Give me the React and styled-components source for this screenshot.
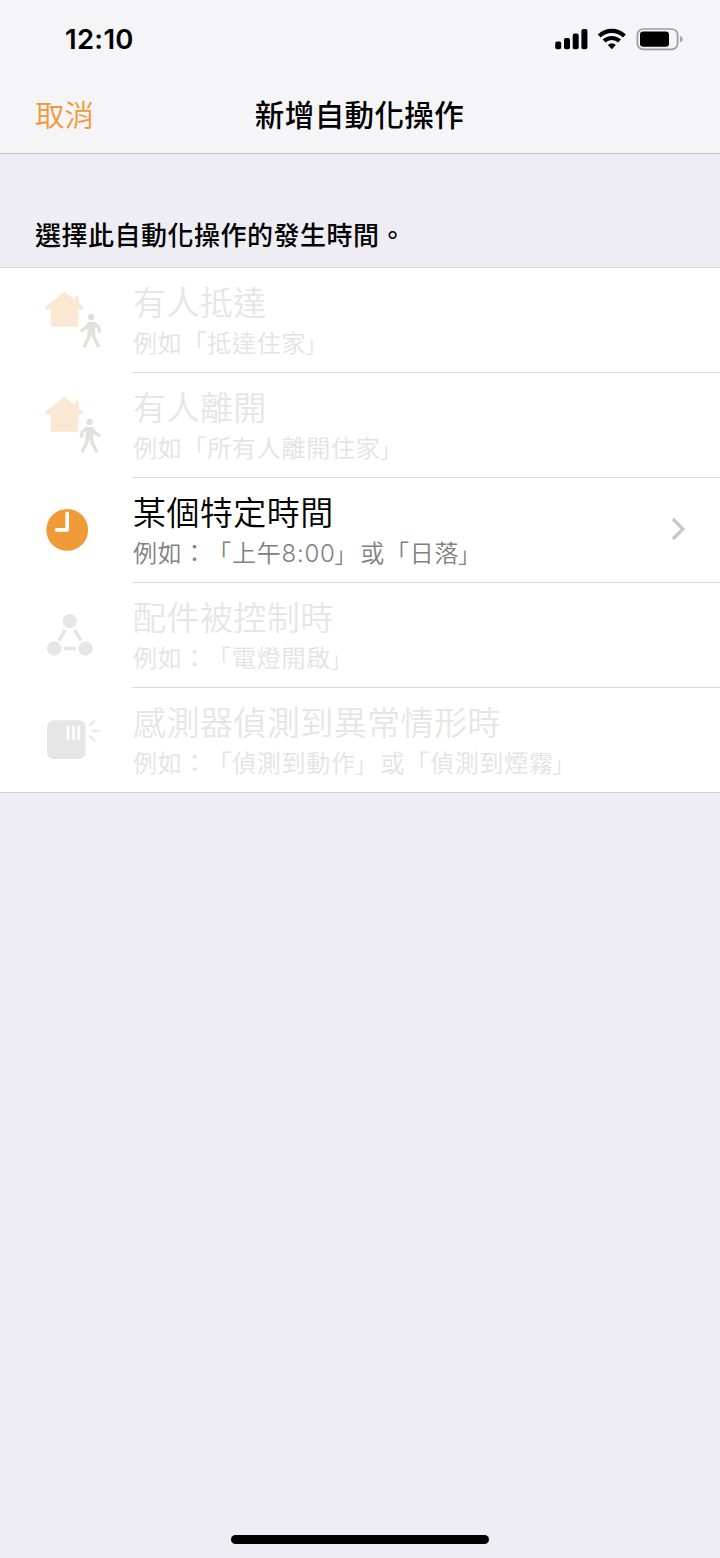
import React from 'react';
import styled, { createGlobalStyle } from 'styled-components';

const GlobalStyle = createGlobalStyle`
  * { box-sizing: border-box; }
  html, body { margin: 0; padding: 0; }
  body {
    background: #eeedf3;
    color: #000;
    font-family: Inter, "Noto Sans CJK TC", sans-serif;
    text-spacing-trim: space-all;
  }
`;

const Screen = styled.div`
  display: flex;
  flex-direction: column;
  width: 720px;
  height: 1558px;
  background: #eeedf3;
  overflow: hidden;
`;

const TopArea = styled.header`
  flex: none;
  height: 154px;
  background: #f5f5f8;
  border-bottom: 1px solid #c2c2c5;
`;

const StatusBar = styled.div`
  display: flex;
  justify-content: space-between;
  align-items: center;
  height: 78px;
  padding: 0 36px 0 65px;
`;

const Clock = styled.span`
  font-size: 27.5px;
  line-height: 34px;
  font-weight: 600;
  letter-spacing: 0.3px;
`;

const StatusIcons = styled.svg`
  display: block;
  width: 129px;
  height: 24px;
`;

const NavBar = styled.nav`
  display: grid;
  grid-template-columns: 180px 1fr 180px;
  align-items: center;
  height: 74px;
`;

const CancelButton = styled.button`
  justify-self: start;
  margin: 0 0 0 35px;
  padding: 0;
  border: 0;
  background: none;
  color: #f09a37;
  font-family: inherit;
  font-weight: 350;
  font-size: 29.5px;
  line-height: 42px;
`;

const NavTitle = styled.h1`
  margin: 0;
  padding-right: 1px;
  text-align: center;
  font-size: 29.5px;
  line-height: 42px;
  font-weight: 500;
  letter-spacing: 0.4px;
  white-space: nowrap;
`;

const SectionTitle = styled.h2`
  flex: none;
  height: 113px;
  margin: 0;
  padding: 63px 0 0 35px;
  font-size: 26px;
  line-height: 38px;
  font-weight: 500;
  letter-spacing: 0.5px;
`;

const List = styled.ul`
  flex: none;
  margin: 0;
  padding: 0;
  list-style: none;
  background: #fff;
  border-top: 1px solid #d9d9dc;
  border-bottom: 1px solid #d0d0d4;
`;

const Row = styled.li`
  display: flex;
  height: 105px;
  color: ${(p) => (p.$enabled ? '#000' : '#e6e6e6')};

  &:last-child { height: 104px; }
`;

const IconCell = styled.div`
  flex: none;
  width: 132px;
`;

const RowIcon = styled.svg`
  display: block;
  width: 132px;
  height: 104px;
  margin-top: 1px;
`;

const RowBody = styled.div`
  flex: 1;
  display: flex;
  justify-content: space-between;
  align-items: center;
  padding-right: 34px;
  border-bottom: 1px solid #d9d9db;

  ${Row}:last-child & { border-bottom: 0; }
`;

const Labels = styled.div`
  display: flex;
  flex-direction: column;
  height: 100%;
  padding: 12px 0 0 1px;
  white-space: nowrap;
`;

const RowTitle = styled.span`
  font-size: 33px;
  line-height: 46px;
  font-weight: 350;
  letter-spacing: 0.45px;
`;

const RowHint = styled.span`
  margin-top: 1px;
  font-size: 24px;
  line-height: 34px;
  font-weight: 350;
  letter-spacing: 0.75px;
  color: ${(p) => (p.$enabled ? '#808080' : '#e3e3e3')};
`;

const ClosingQuote = styled.span`
  margin: 0 4px 0 -1px;
  font-size: 21px;
  line-height: 1;
`;

const Chevron = styled.svg`
  display: block;
  width: 16px;
  height: 26px;
  margin-bottom: 2px;
`;

const HomeIndicator = styled.div`
  width: 258px;
  height: 9px;
  margin: auto auto 14px;
  border-radius: 5px;
  background: #000;
`;

const House = () => (
  <g fill="#fae8d2" stroke="#fae8d2" strokeWidth="3" strokeLinejoin="round">
    <path d="M64.3 24.6 L46.8 38.4 V39 H52.2 V56.2 H76.8 V39 H81.8 V38.4 L77.6 35 V28.4 H76 V33.8 Z" />
  </g>
);

const Walker = () => (
  <g fill="none" stroke="#e1e0dc" strokeWidth="3.4" strokeLinecap="round" strokeLinejoin="round">
    <circle cx="91.2" cy="48" r="3.2" fill="#e1e0dc" stroke="none" />
    <path d="M89.3 54.6 H93.4 L94 64.5 H88.8 Z" fill="#e1e0dc" strokeWidth="3" />
    <path d="M89 54.4 L86 58.6 L81.9 61.4" />
    <path d="M94 54.4 L98.6 57.8 L99.4 62.4" />
    <path d="M89.7 64 L88.5 69 L84.4 77" />
    <path d="M92.9 64 L94.4 69.4 L98.3 77" />
  </g>
);

const icons = {
  arrive: (
    <>
      <House />
      <Walker />
    </>
  ),
  leave: (
    <>
      <House />
      <g transform="translate(180.8 0) scale(-1 1)">
        <Walker />
      </g>
    </>
  ),
  time: (
    <>
      <circle cx="67.2" cy="50.9" r="20.9" fill="#f09a37" />
      <path d="M67.2 34.2 V50.9 H56.6" fill="none" stroke="#fff" strokeWidth="3.6" strokeLinecap="round" strokeLinejoin="round" />
    </>
  ),
  accessory: (
    <g fill="#e6e6e6">
      <circle cx="69.8" cy="37.1" r="7.2" />
      <circle cx="54.1" cy="64.5" r="7.2" />
      <circle cx="85.6" cy="64.5" r="7.2" />
      <path d="M65.2 45.8 L58.9 56.6 M74.4 45.8 L81 56.6 M63.7 64.5 H76.2" stroke="#e6e6e6" strokeWidth="3.6" />
    </g>
  ),
  sensor: (
    <g transform="translate(0 -0.7)">
      <rect x="47" y="32" width="38.6" height="38.6" rx="6.5" fill="#e6e6e6" />
      <path d="M68 38.5 V50.5 M73.5 38.5 V50.5 M78.8 38.5 V50.5" stroke="#fff" strokeWidth="2.5" strokeLinecap="round" />
      <path d="M89.8 37 L94.2 32.7 M92.6 42.5 H98.8 M89.8 48 L94.2 52.2" stroke="#e6e6e6" strokeWidth="2.1" strokeLinecap="round" />
    </g>
  ),
};

const triggers = [
  { icon: 'arrive', title: '有人抵達', hint: '例如「抵達住家」' },
  { icon: 'leave', title: '有人離開', hint: '例如「所有人離開住家」' },
  { icon: 'time', title: '某個特定時間', hint: '例如：「上午8:00」或「日落」', enabled: true },
  { icon: 'accessory', title: '配件被控制時', hint: '例如：「電燈開啟」' },
  { icon: 'sensor', title: '感測器偵測到異常情形時', hint: '例如：「偵測到動作」或「偵測到煙霧」' },
];

const Hint = ({ text, enabled }) => (
  <RowHint $enabled={enabled}>
    {text.split(/(」)/).map((part, i) => (part === '」' ? <ClosingQuote key={i}>{part}</ClosingQuote> : part))}
  </RowHint>
);

export default function App() {
  return (
    <Screen>
      <GlobalStyle />
      <TopArea>
        <StatusBar>
          <Clock>12:10</Clock>
          <StatusIcons viewBox="555 27 129 24">
            <rect x="555.2" y="41.6" width="6" height="7.6" rx="1.8" />
            <rect x="564" y="38" width="6" height="11.2" rx="1.8" />
            <rect x="572.7" y="33.6" width="6" height="15.6" rx="1.8" />
            <rect x="581.4" y="29" width="6" height="20.2" rx="1.8" />
            <g fill="none" stroke="#000" strokeWidth="4.1">
              <path d="M599.2 36 C606.3 29.1 617.3 29.1 624.4 36" />
              <path d="M604.1 41 C608.4 36.9 615.2 36.9 619.5 41" />
            </g>
            <path d="M607.8 44.9 Q611.8 41.7 615.8 44.9 L611.8 49.2 Z" />
            <rect x="637.4" y="29" width="40.2" height="20.4" rx="5.8" fill="none" stroke="#9c9c9f" strokeWidth="1.7" />
            <rect x="640" y="31.6" width="29" height="15.2" rx="3.2" />
            <path d="M680.2 35.8 C683.4 37.4 683.4 41 680.2 42.6 Z" fill="#9c9c9f" />
          </StatusIcons>
        </StatusBar>
        <NavBar>
          <CancelButton>取消</CancelButton>
          <NavTitle>新增自動化操作</NavTitle>
        </NavBar>
      </TopArea>
      <SectionTitle>選擇此自動化操作的發生時間。</SectionTitle>
      <List>
        {triggers.map((t) => (
          <Row key={t.icon} $enabled={t.enabled}>
            <IconCell>
              <RowIcon viewBox="0 0 132 104">{icons[t.icon]}</RowIcon>
            </IconCell>
            <RowBody>
              <Labels>
                <RowTitle>{t.title}</RowTitle>
                <Hint text={t.hint} enabled={t.enabled} />
              </Labels>
              {t.enabled && (
                <Chevron viewBox="0 0 16 26">
                  <path d="M3 3 L13 13 L3 23" fill="none" stroke="#c7c7cc" strokeWidth="3.2" />
                </Chevron>
              )}
            </RowBody>
          </Row>
        ))}
      </List>
      <HomeIndicator />
    </Screen>
  );
}
